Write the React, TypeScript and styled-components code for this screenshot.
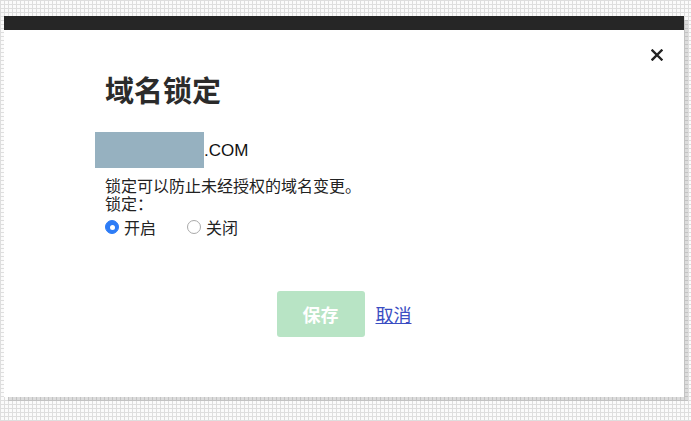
import React, { useState } from "react";
import styled, { createGlobalStyle } from "styled-components";

const Global = createGlobalStyle`
  html, body { margin: 0; padding: 0; }
  body {
    width: 691px; height: 421px; overflow: hidden;
    font-family: "Noto Sans CJK SC", "Liberation Sans", sans-serif;
    background-color: #fbfbfb;
    background-image:
      linear-gradient(to right, #dedede 1px, transparent 1px),
      linear-gradient(to bottom, #dedede 1px, transparent 1px);
    background-size: 4px 4px;
  }
`;

const Page = styled.div`
  padding: 16px 0 0 4px;
`;

const Modal = styled.div`
  position: relative;
  width: 680px;
  height: 381px;
  background: #fff;
  box-shadow: 4px 4px 0 rgba(0, 0, 0, 0.12);
  display: flex;
  flex-direction: column;
`;

const TopBar = styled.div`
  height: 14px;
  background: #262626;
`;

const Close = styled.button`
  position: absolute;
  top: 29px;
  right: 17px;
  width: 20px;
  height: 20px;
  border: 0;
  padding: 0;
  background: transparent;
  display: flex;
  align-items: center;
  justify-content: center;
  cursor: pointer;
`;

const Body = styled.div`
  padding: 39px 0 0 101px;
  display: flex;
  flex-direction: column;
`;

const Title = styled.h1`
  margin: 0;
  font-size: 29px;
  line-height: 40px;
  font-weight: 700;
  color: #2b2b2b;
`;

const Domain = styled.div`
  margin: 23px 0 0 -10px;
  display: flex;
  align-items: center;
  height: 36px;
`;

const Mask = styled.div`
  width: 109px;
  height: 36px;
  background: #96b1c0;
`;

const Tld = styled.span`
  font-family: "Liberation Sans", Arial, sans-serif;
  font-size: 17px;
  color: #111;
  margin-top: 2px;
`;

const Text = styled.div`
  font-size: 16px;
  line-height: 18px;
  color: #222;
`;

const Hint = styled(Text)`
  margin-top: 8px;
`;

const Radios = styled.div`
  display: flex;
  gap: 31px;
  margin-top: 4px;
  height: 22px;
  align-items: center;
`;

const RadioLabel = styled.label`
  display: flex;
  align-items: center;
  gap: 5px;
  font-size: 16px;
  color: #222;
  cursor: pointer;
`;

const Dot = styled.span<{ $on: boolean }>`
  width: 14px;
  height: 14px;
  border-radius: 50%;
  box-sizing: border-box;
  border: 1px solid ${(p) => (p.$on ? "#2d7cf6" : "#a9a9a9")};
  background: ${(p) => (p.$on ? "#2d7cf6" : "#fff")};
  display: flex;
  align-items: center;
  justify-content: center;
  &::after {
    content: "";
    width: 5px;
    height: 5px;
    border-radius: 50%;
    background: #fff;
    display: ${(p) => (p.$on ? "block" : "none")};
  }
`;

const Actions = styled.div`
  display: flex;
  align-items: center;
  justify-content: center;
  gap: 11px;
  margin-top: 53px;
`;

const Save = styled.button`
  width: 88px;
  height: 46px;
  border: 0;
  border-radius: 3px;
  background: #b8e4c5;
  color: #fff;
  font-family: inherit;
  font-size: 18px;
  font-weight: 700;
`;

const Cancel = styled.a`
  color: #3a4dc2;
  font-size: 18px;
  text-decoration: underline;
  cursor: pointer;
`;

export default function App() {
  const [on, setOn] = useState(true);
  return (
    <Page>
      <Global />
      <Modal>
        <TopBar />
        <Close aria-label="close">
          <svg width="12" height="12" viewBox="0 0 12 12">
            <path d="M1.5 1.5 L10.5 10.5 M10.5 1.5 L1.5 10.5" stroke="#222" strokeWidth="2.4" strokeLinecap="square" />
          </svg>
        </Close>
        <Body>
          <Title>域名锁定</Title>
          <Domain>
            <Mask />
            <Tld>.COM</Tld>
          </Domain>
          <Hint>锁定可以防止未经授权的域名变更。</Hint>
          <Text>锁定：</Text>
          <Radios>
            <RadioLabel onClick={() => setOn(true)}>
              <Dot $on={on} />
              开启
            </RadioLabel>
            <RadioLabel onClick={() => setOn(false)}>
              <Dot $on={!on} />
              关闭
            </RadioLabel>
          </Radios>
        </Body>
        <Actions>
          <Save>保存</Save>
          <Cancel>取消</Cancel>
        </Actions>
      </Modal>
    </Page>
  );
}
